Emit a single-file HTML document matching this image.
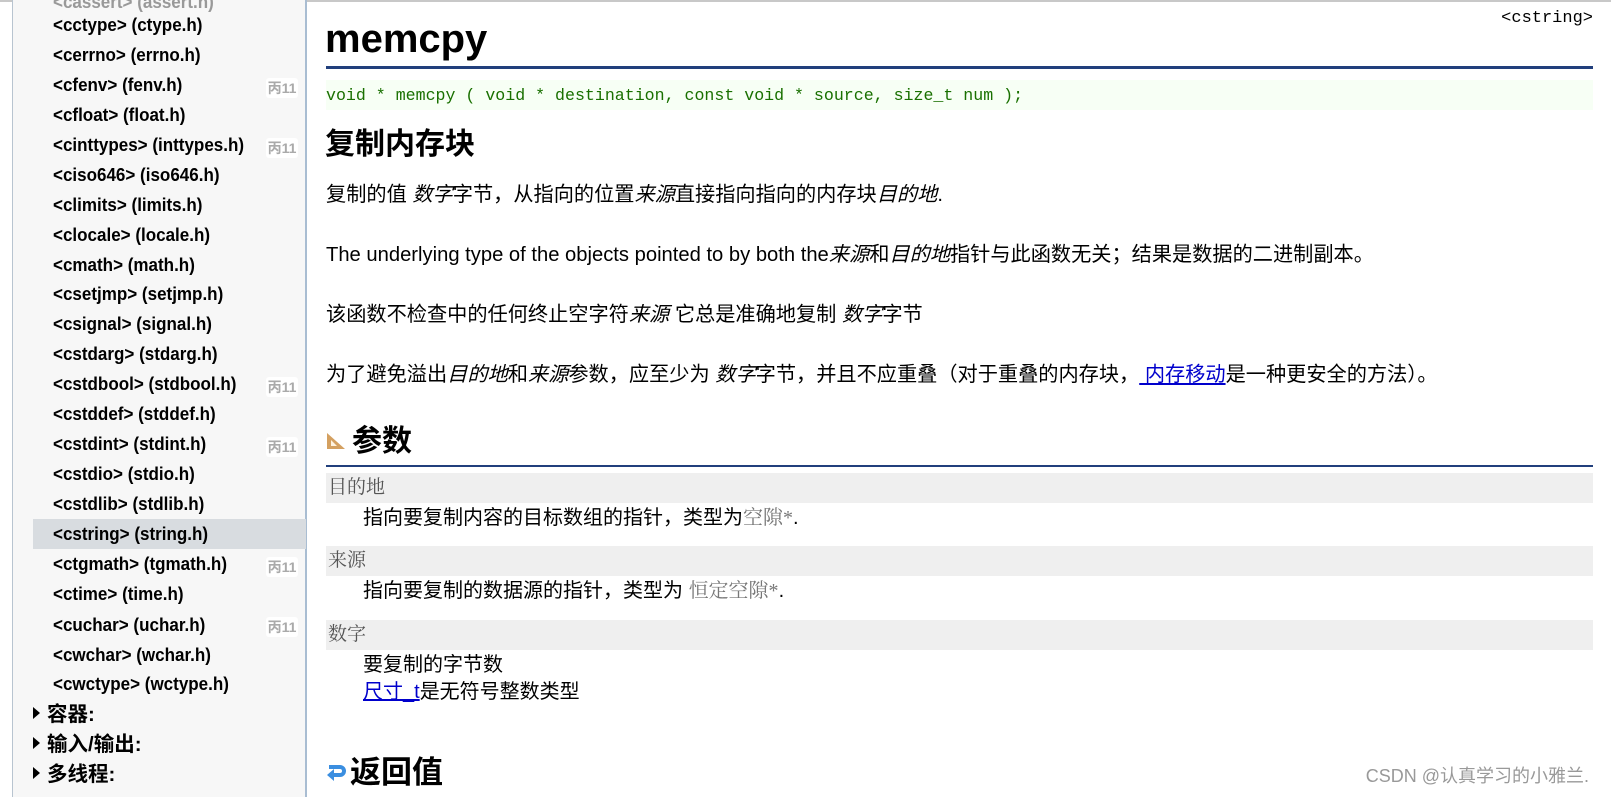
<!DOCTYPE html>
<html><head><meta charset="utf-8"><style>
*{margin:0;padding:0;box-sizing:border-box}
body{width:1611px;height:797px;overflow:hidden;background:#fff;position:relative;font-family:"Liberation Sans","Noto Sans CJK SC",sans-serif;color:#000}
.topline{position:absolute;left:0;top:0;width:1611px;height:2px;background:#c8c8c8}
.side{position:absolute;left:12px;top:0;width:295px;height:797px;background:#f7f7f7;border-left:1px solid #b8c4d0;border-right:2px solid #a9bdd2}
.it{position:absolute;left:53px;font-family:"Liberation Sans Narrow","Liberation Sans","Noto Sans CJK SC",sans-serif;font-weight:bold;font-size:18.5px;line-height:20px;white-space:nowrap;transform:translateY(-10px) scaleX(0.92);transform-origin:left center}
.hl{position:absolute;left:33px;top:519px;width:273px;height:30px;background:#d8dce0}
.bd{position:absolute;left:266px;width:32px;height:20px;font-size:14px;font-weight:bold;color:#aaa;background:#fff;border-radius:3px;line-height:20px;text-align:center;transform:translateY(-10px);font-family:"Liberation Sans","Noto Sans CJK SC",sans-serif}
.cat{position:absolute;left:33px;font-weight:bold;font-size:20.5px;line-height:22px;transform:translateY(-11px);white-space:nowrap}
.cat:before{content:"";display:inline-block;border-left:7px solid #000;border-top:6px solid transparent;border-bottom:6px solid transparent;margin-right:7px;vertical-align:2px}
.a{position:absolute;white-space:nowrap}
.p{position:absolute;left:326px;font-size:20.2px;line-height:26px;transform:translateY(-13px);white-space:nowrap}
i{font-style:italic}
.bar{position:absolute;left:326px;width:1267px;height:30px;background:#efefef;font-family:"Liberation Serif","Noto Serif CJK SC",serif;font-size:19px;color:#555;line-height:30px;padding-left:2px}
.d{position:absolute;left:363px;font-size:20px;line-height:26px;transform:translateY(-13px);white-space:nowrap}
.ty{font-family:"Liberation Serif","Noto Serif CJK SC",serif;color:#777}
a{color:#00c;text-decoration:underline}
</style></head><body>
<div class="topline"></div>
<div class="side"></div>
<div class="hl"></div>
<div class="it" style="top:2px;color:#999">&lt;cassert&gt; (assert.h)</div>
<div class="it" style="top:25px">&lt;cctype&gt; (ctype.h)</div>
<div class="it" style="top:55px">&lt;cerrno&gt; (errno.h)</div>
<div class="it" style="top:85px">&lt;cfenv&gt; (fenv.h)</div><div class="bd" style="top:88px">丙11</div>
<div class="it" style="top:115px">&lt;cfloat&gt; (float.h)</div>
<div class="it" style="top:145px">&lt;cinttypes&gt; (inttypes.h)</div><div class="bd" style="top:148px">丙11</div>
<div class="it" style="top:175px">&lt;ciso646&gt; (iso646.h)</div>
<div class="it" style="top:205px">&lt;climits&gt; (limits.h)</div>
<div class="it" style="top:235px">&lt;clocale&gt; (locale.h)</div>
<div class="it" style="top:265px">&lt;cmath&gt; (math.h)</div>
<div class="it" style="top:294px">&lt;csetjmp&gt; (setjmp.h)</div>
<div class="it" style="top:324px">&lt;csignal&gt; (signal.h)</div>
<div class="it" style="top:354px">&lt;cstdarg&gt; (stdarg.h)</div>
<div class="it" style="top:384px">&lt;cstdbool&gt; (stdbool.h)</div><div class="bd" style="top:387px">丙11</div>
<div class="it" style="top:414px">&lt;cstddef&gt; (stddef.h)</div>
<div class="it" style="top:444px">&lt;cstdint&gt; (stdint.h)</div><div class="bd" style="top:447px">丙11</div>
<div class="it" style="top:474px">&lt;cstdio&gt; (stdio.h)</div>
<div class="it" style="top:504px">&lt;cstdlib&gt; (stdlib.h)</div>
<div class="it" style="top:534px">&lt;cstring&gt; (string.h)</div>
<div class="it" style="top:564px">&lt;ctgmath&gt; (tgmath.h)</div><div class="bd" style="top:567px">丙11</div>
<div class="it" style="top:594px">&lt;ctime&gt; (time.h)</div>
<div class="it" style="top:625px">&lt;cuchar&gt; (uchar.h)</div><div class="bd" style="top:627px">丙11</div>
<div class="it" style="top:655px">&lt;cwchar&gt; (wchar.h)</div>
<div class="it" style="top:684px">&lt;cwctype&gt; (wctype.h)</div>
<div class="cat" style="top:715px">容器:</div>
<div class="cat" style="top:745px">输入/输出:</div>
<div class="cat" style="top:775px">多线程:</div>

<div class="a" style="right:18px;top:9px;font-family:'Liberation Mono',monospace;font-size:17px">&lt;cstring&gt;</div>
<div class="a" style="left:325px;top:16px;font-size:40px;font-weight:bold;line-height:46px">memcpy</div>
<div class="a" style="left:326px;top:66px;width:1267px;height:3px;background:#213f7c"></div>
<div class="a" style="left:326px;top:80px;width:1267px;height:30px;background:#f7fff5"></div>
<div class="a" style="left:326px;top:85px;font-family:'Liberation Mono',monospace;font-size:16.6px;color:#197000;line-height:22px">void * memcpy ( void * destination, const void * source, size_t num );</div>
<div class="a" style="left:325px;top:127px;font-size:30px;font-weight:bold;line-height:36px">复制内存块</div>
<div class="p" style="top:195px">复制的值 <i>数字</i>字节，从指向的位置<i>来源</i>直接指向指向的内存块<i>目的地</i>.</div>
<div class="p" style="top:255px">The underlying type of the objects pointed to by both the<i>来源</i>和<i>目的地</i>指针与此函数无关；结果是数据的二进制副本。</div>
<div class="p" style="top:315px">该函数不检查中的任何终止空字符<i>来源</i> 它总是准确地复制 <i>数字</i>字节</div>
<div class="p" style="top:375px">为了避免溢出<i>目的地</i>和<i>来源</i>参数，应至少为 <i>数字</i>字节，并且不应重叠（对于重叠的内存块，<a> 内存移动</a>是一种更安全的方法）。</div>
<svg class="a" style="left:326px;top:432px" width="20" height="18"><polygon points="1,17 1,1 19,17" fill="#d4a060"/><polygon points="5,14 5,8 11,14" fill="#fff3e0"/></svg>
<div class="a" style="left:352px;top:424px;font-size:30px;font-weight:bold;line-height:36px">参数</div>
<div class="a" style="left:326px;top:465px;width:1267px;height:2px;background:#213f7c"></div>
<div class="bar" style="top:473px">目的地</div>
<div class="d" style="top:518px">指向要复制内容的目标数组的指针，类型为<span class="ty">空隙*</span>.</div>
<div class="bar" style="top:546px">来源</div>
<div class="d" style="top:591px">指向要复制的数据源的指针，类型为 <span class="ty">恒定空隙*</span>.</div>
<div class="bar" style="top:620px">数字</div>
<div class="d" style="top:665px">要复制的字节数</div>
<div class="d" style="top:692px"><a>尺寸_t</a>是无符号整数类型</div>
<svg class="a" style="left:326px;top:763px" width="20" height="18"><path d="M3 4 H14 A4 4 0 0 1 14 12 H5" stroke="#3a8ee0" stroke-width="4" fill="none"/><polygon points="1,12 8,6 8,18" fill="#3a8ee0"/></svg>
<div class="a" style="left:350px;top:755px;font-size:31px;font-weight:bold;line-height:36px">返回值</div>
<div class="a" style="right:22px;top:765px;font-size:18px;color:#999;line-height:22px">CSDN @认真学习的小雅兰.</div>
</body></html>
